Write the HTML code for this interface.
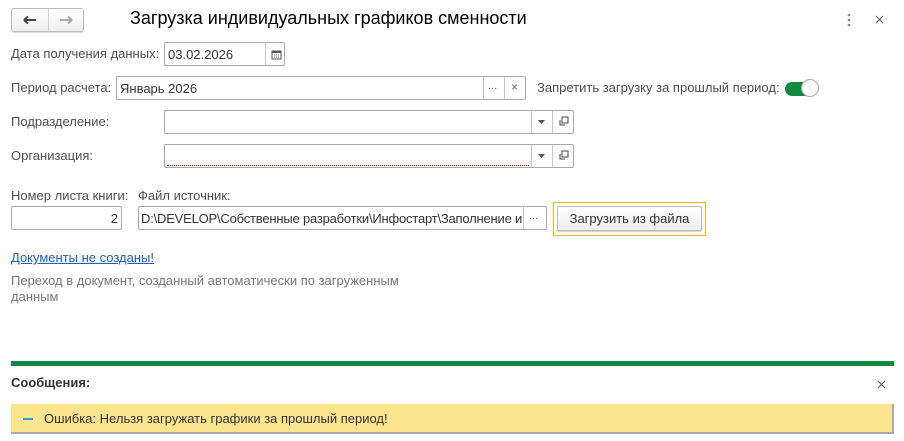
<!DOCTYPE html>
<html><head><meta charset="utf-8"><style>
*{box-sizing:border-box;margin:0;padding:0}
body{width:904px;height:441px;background:#fff;position:relative;overflow:hidden;font-family:"Liberation Sans",Arial,sans-serif;font-size:13px;color:#4d4d4d}
.a{position:absolute;white-space:nowrap}
.inp{position:absolute;border:1px solid #a9a9a9;border-radius:2px;background:#fff;height:24px}
.inp .t{position:absolute;left:3px;top:4px;color:#333}
.sep{position:absolute;top:0;bottom:0;border-left:1px solid #c8c8c8}
.lbl{color:#4d4d4d}
</style></head><body>
<div class="a" style="left:11px;top:8px;width:73px;height:24px;border:1px solid #bbb;border-radius:3px;background:linear-gradient(#fff,#efefef);box-shadow:0 1px 1px rgba(0,0,0,.15)"></div>
<div class="a" style="left:48px;top:9px;height:22px;border-left:1px solid #d0d0d0"></div>
<svg class="a" style="left:23px;top:15px" width="14" height="10"><path d="M1 5H13M1 5L5 1.5M1 5L5 8.5" stroke="#444" stroke-width="2" fill="none"/></svg>
<svg class="a" style="left:59px;top:15px" width="14" height="10"><path d="M1 5H13M13 5L9 1.5M13 5L9 8.5" stroke="#aaa" stroke-width="2" fill="none"/></svg>
<div class="a" style="left:130px;top:8px;font-size:18px;color:#000">Загрузка индивидуальных графиков сменности</div>
<svg class="a" style="left:846px;top:13px" width="6" height="14"><circle cx="3" cy="2" r="1.3" fill="#888"/><circle cx="3" cy="7" r="1.3" fill="#888"/><circle cx="3" cy="12" r="1.3" fill="#888"/></svg>
<svg class="a" style="left:875px;top:15px" width="9" height="9"><path d="M1 1L8 8M8 1L1 8" stroke="#666" stroke-width="1.2"/></svg>

<div class="a lbl" style="left:11px;top:46px">Дата получения данных:</div>
<div class="inp" style="left:164px;top:42px;width:121px"><span class="t">03.02.2026</span><div class="sep" style="left:100px"></div>
<svg class="a" style="left:106px;top:6px" width="11" height="11"><rect x="1" y="2" width="9" height="8" fill="none" stroke="#555"/><rect x="1" y="2" width="9" height="2" fill="#555"/><path d="M3 6h1M5 6h1M7 6h1M3 8h1M5 8h1M7 8h1" stroke="#555"/></svg></div>

<div class="a lbl" style="left:11px;top:80px">Период расчета:</div>
<div class="inp" style="left:116px;top:76px;width:410px"><span class="t">Январь 2026</span><div class="sep" style="left:366px"></div><div class="sep" style="left:387px"></div>
<span class="a" style="left:371px;top:3px;color:#666;font-size:11px">...</span>
<span class="a" style="left:394px;top:3px;color:#666;font-size:12px">×</span></div>
<div class="a lbl" style="left:537px;top:80px">Запретить загрузку за прошлый период:</div>
<div class="a" style="left:785px;top:82px;width:26px;height:14px;border-radius:7px;background:#0f8a3e"></div>
<div class="a" style="left:801px;top:79px;width:18px;height:18px;border-radius:50%;background:#fff;border:1px solid #aaa"></div>

<div class="a lbl" style="left:11px;top:114px">Подразделение:</div>
<div class="inp" style="left:164px;top:110px;width:410px"><div class="sep" style="left:366px"></div><div class="sep" style="left:387px"></div>
<svg class="a" style="left:373px;top:9px" width="7" height="5"><path d="M0 0H7L3.5 4Z" fill="#555"/></svg>
<svg class="a" style="left:393px;top:5px" width="11" height="11"><rect x="4" y="1" width="6" height="6" fill="none" stroke="#444"/><path d="M2 4V9H7" fill="none" stroke="#444"/></svg></div>

<div class="a lbl" style="left:11px;top:148px">Организация:</div>
<div class="inp" style="left:164px;top:144px;width:410px"><div class="a" style="left:2px;top:20px;width:362px;border-top:1px dotted #d00"></div><div class="sep" style="left:366px"></div><div class="sep" style="left:387px"></div>
<svg class="a" style="left:373px;top:9px" width="7" height="5"><path d="M0 0H7L3.5 4Z" fill="#555"/></svg>
<svg class="a" style="left:393px;top:5px" width="11" height="11"><rect x="4" y="1" width="6" height="6" fill="none" stroke="#444"/><path d="M2 4V9H7" fill="none" stroke="#444"/></svg></div>

<div class="a lbl" style="left:11px;top:188px">Номер листа книги:</div>
<div class="a lbl" style="left:138px;top:188px">Файл источник:</div>
<div class="inp" style="left:11px;top:206px;width:111px"><span class="a" style="right:3px;top:4px;color:#333">2</span></div>
<div class="inp" style="left:138px;top:206px;width:409px;overflow:hidden"><span class="t" style="left:2px;letter-spacing:-0.2px">D:\DEVELOP\Собственные разработки\Инфостарт\Заполнение и</span><div class="a" style="left:384px;top:0;width:24px;height:22px;background:#fff;border-left:1px solid #c8c8c8"></div><span class="a" style="left:390px;top:3px;color:#666;font-size:11px">...</span></div>
<div class="a" style="left:553px;top:202px;width:153px;height:34px;border:1.5px solid #f0c000"></div>
<div class="a" style="left:557px;top:206px;width:145px;height:25px;border:1px solid #bbb;border-radius:2px;background:linear-gradient(#fff,#eee);box-shadow:0 1px 1px rgba(0,0,0,.2);text-align:center;line-height:23px;color:#333">Загрузить из файла</div>

<div class="a" style="left:11px;top:250px;color:#1f5fbf;text-decoration:underline">Документы не созданы!</div>
<div class="a" style="left:11px;top:273px;color:#777;line-height:16px">Переход в документ, созданный автоматически по загруженным<br>данным</div>

<div class="a" style="left:11px;top:361px;width:883px;height:5px;background:#0f8a3e"></div>
<div class="a" style="left:11px;top:375px;font-weight:bold;color:#333">Сообщения:</div>
<svg class="a" style="left:877px;top:380px" width="9" height="9"><path d="M1 1L8 8M8 1L1 8" stroke="#666" stroke-width="1.2"/></svg>
<div class="a" style="left:11px;top:404px;width:883px;height:30px;background:#fde590;border-right:2px solid #aaa;border-bottom:2px solid #aaa"></div>
<div class="a" style="left:23px;top:418px;width:10px;height:2px;background:#2aa0d8"></div>
<div class="a" style="left:44px;top:411px;color:#333">Ошибка: Нельзя загружать графики за прошлый период!</div>
</body></html>
